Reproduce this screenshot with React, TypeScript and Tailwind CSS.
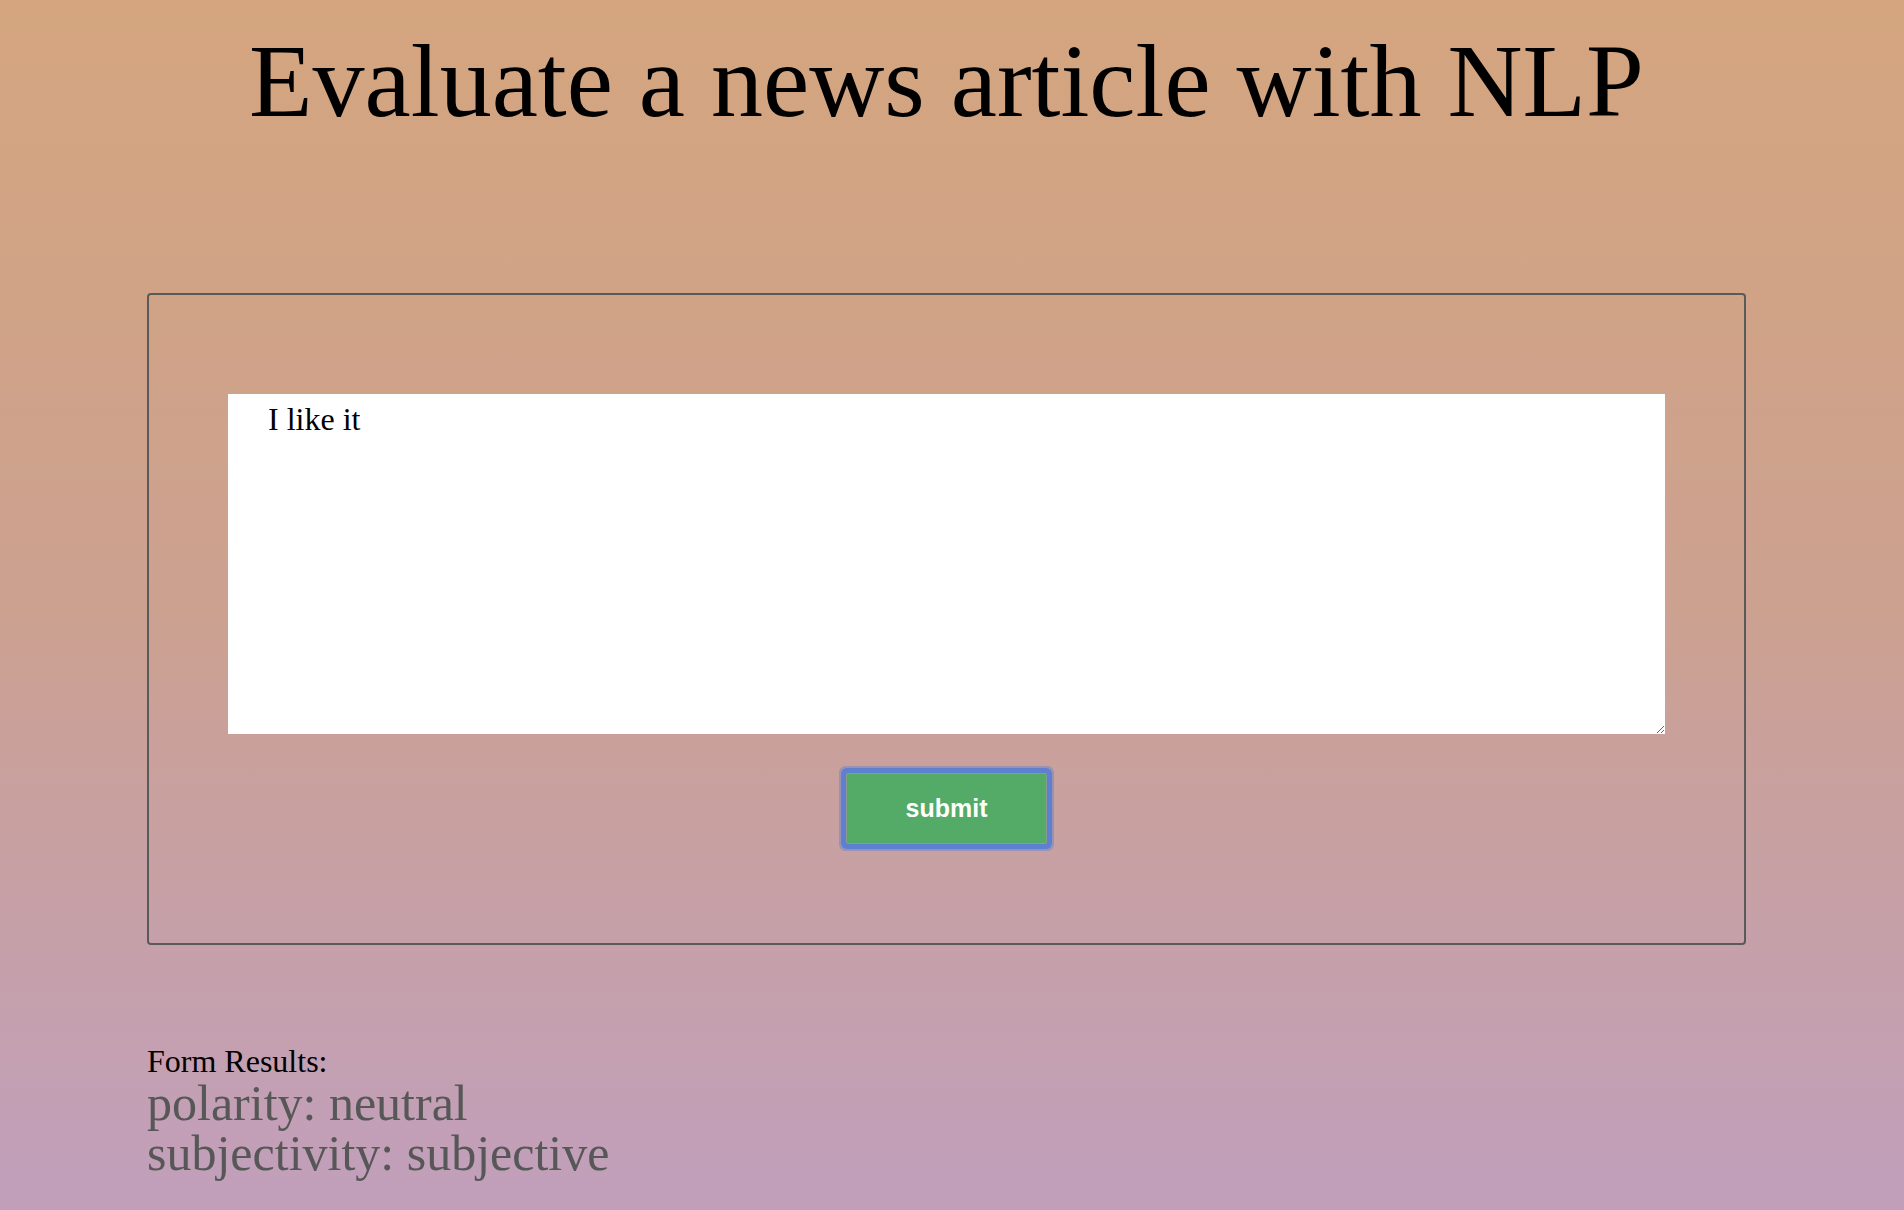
export default function App() {
  return (
    <div className="min-h-screen bg-linear-to-b from-[#d4a57e] via-[#cca190] to-[#c19fbc] font-['Liberation_Serif',serif] text-black">
      <h1 className="ml-[147px] w-[1599px] pt-[29px] text-center text-[104px] leading-none font-normal">
        Evaluate a news article with NLP
      </h1>

      <form
        className="ml-[147px] mt-[160px] w-[1599px] rounded-[4px] border-2 border-[#5a5a5a] px-[79px] pt-[99px] pb-[99px] flex flex-col items-center"
        onSubmit={(e) => e.preventDefault()}
      >
        <textarea
          defaultValue="I like it"
          className="block h-[340px] w-full bg-white px-[40px] pt-[7px] text-[32px] leading-[36px] font-['Liberation_Serif',serif] text-black outline-none"
        />
        <button
          type="submit"
          className="mt-[39px] h-[71px] w-[201px] rounded-[2px] border border-[#8a9c8e] bg-[#54ab68] font-['Liberation_Sans',sans-serif] text-[25px] font-bold text-white shadow-[0_0_0_5px_#5f80d1,0_0_0_7px_rgba(95,128,209,0.45)]"
        >
          submit
        </button>
      </form>

      <section className="ml-[147px] mt-[99px]">
        <div className="text-[32px] leading-[34px]">Form Results:</div>
        <div className="text-[50px] leading-[50px] text-[#575757]">polarity: neutral</div>
        <div className="text-[50px] leading-[50px] text-[#575757]">subjectivity: subjective</div>
      </section>
    </div>
  );
}
